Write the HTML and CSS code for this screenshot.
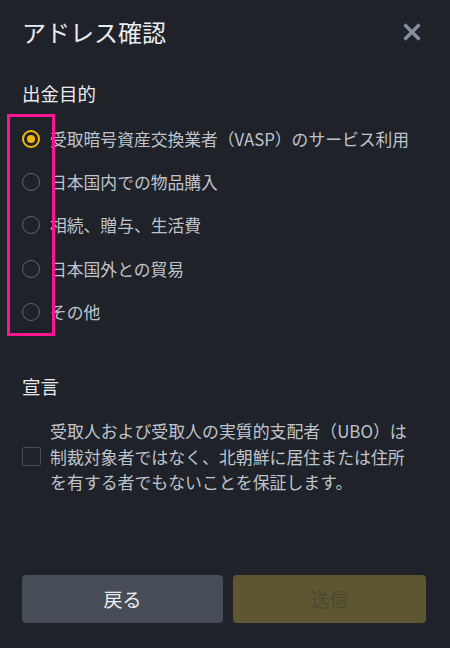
FILE: index.html
```html
<!DOCTYPE html>
<html lang="ja">
<head>
<meta charset="utf-8">
<link rel="stylesheet" href="styles.css">
</head>
<body>
<div class="modal">
  <div class="header">
    <h1 class="title">アドレス確認</h1>
    <svg class="close" width="18" height="18" viewBox="0 0 18 18"><path d="M1.5 1.5L16.5 16.5M16.5 1.5L1.5 16.5" stroke="#848e9c" stroke-width="3.4" stroke-linecap="butt"/></svg>
  </div>
  <h2 class="section-title purpose">出金目的</h2>
  <div class="radio-list">
    <div class="radio-row"><span class="radio checked"></span><span class="opt">受取暗号資産交換業者（VASP）のサービス利用</span></div>
    <div class="radio-row"><span class="radio"></span><span class="opt">日本国内での物品購入</span></div>
    <div class="radio-row"><span class="radio"></span><span class="opt">相続、贈与、生活費</span></div>
    <div class="radio-row"><span class="radio"></span><span class="opt">日本国外との貿易</span></div>
    <div class="radio-row"><span class="radio"></span><span class="opt">その他</span></div>
  </div>
  <h2 class="section-title decl-title">宣言</h2>
  <div class="decl">
    <span class="checkbox"></span>
    <p class="decl-text">受取人および受取人の実質的支配者（UBO）は制裁対象者ではなく、北朝鮮に居住または住所を有する者でもないことを保証します。</p>
  </div>
  <div class="buttons">
    <button class="btn back">戻る</button>
    <button class="btn submit">送信</button>
  </div>
</div>
<div class="highlight"></div>
</body>
</html>
```
FILE: styles.css
```css
* { box-sizing: border-box; }
html, body {
  margin: 0;
  padding: 0;
  width: 450px;
  height: 648px;
  background: #1f2229;
  overflow: hidden;
}
body {
  position: relative;
  font-family: "Noto Sans CJK JP", "Noto Sans", sans-serif;
  color: #eaecef;
}
.modal {
  padding: 14px 24px 0 22px;
  display: flex;
  flex-direction: column;
}
.header {
  display: flex;
  justify-content: space-between;
  align-items: center;
  height: 36px;
}
.title {
  margin: 0;
  font-size: 24px;
  font-weight: 400;
  line-height: 36px;
  color: #eaecef;
}
.close {
  margin-right: 5px;
}
.section-title {
  margin: 0;
  font-size: 18.5px;
  font-weight: 400;
  line-height: 26px;
  color: #eaecef;
}
.purpose { margin-top: 30px; }
.radio-list {
  margin-top: 11px;
  display: flex;
  flex-direction: column;
}
.radio-row {
  height: 43.3px;
  display: flex;
  align-items: center;
  gap: 10px;
}
.radio {
  width: 18px;
  height: 18px;
  border-radius: 50%;
  border: 1.5px solid #5e6673;
  flex: none;
  display: flex;
  align-items: center;
  justify-content: center;
}
.radio.checked {
  border: 2px solid #f0b90b;
}
.radio.checked::after {
  content: "";
  width: 8px;
  height: 8px;
  border-radius: 50%;
  background: #f0b90b;
}
.opt {
  font-size: 16.8px;
  line-height: 24px;
  color: #bfc4cc;
  white-space: nowrap;
}
.decl-title { margin-top: 40px; }
.decl {
  margin-top: 19px;
  display: flex;
  align-items: center;
  gap: 9px;
}
.checkbox {
  width: 19px;
  height: 19px;
  border: 1.5px solid #474d57;
  border-radius: 2px;
  flex: none;
}
.decl-text {
  margin: 0;
  font-size: 16.9px;
  line-height: 25.5px;
  color: #bfc4cc;
  width: 362px;
}
.buttons {
  margin-top: 80px;
  display: flex;
  gap: 10px;
}
.btn {
  flex: none;
  height: 48px;
  border: none;
  border-radius: 4px;
  font-family: "Noto Sans CJK JP", "Noto Sans", sans-serif;
  font-size: 19px;
}
.back {
  width: 201px;
  background: #474d57;
  color: #eaecef;
}
.submit {
  width: 193px;
  background: #5e5630;
  color: #4a4733;
}
.highlight {
  position: absolute;
  left: 7px;
  top: 114px;
  width: 48px;
  height: 222px;
  border: 3px solid #ff1493;
}
```
